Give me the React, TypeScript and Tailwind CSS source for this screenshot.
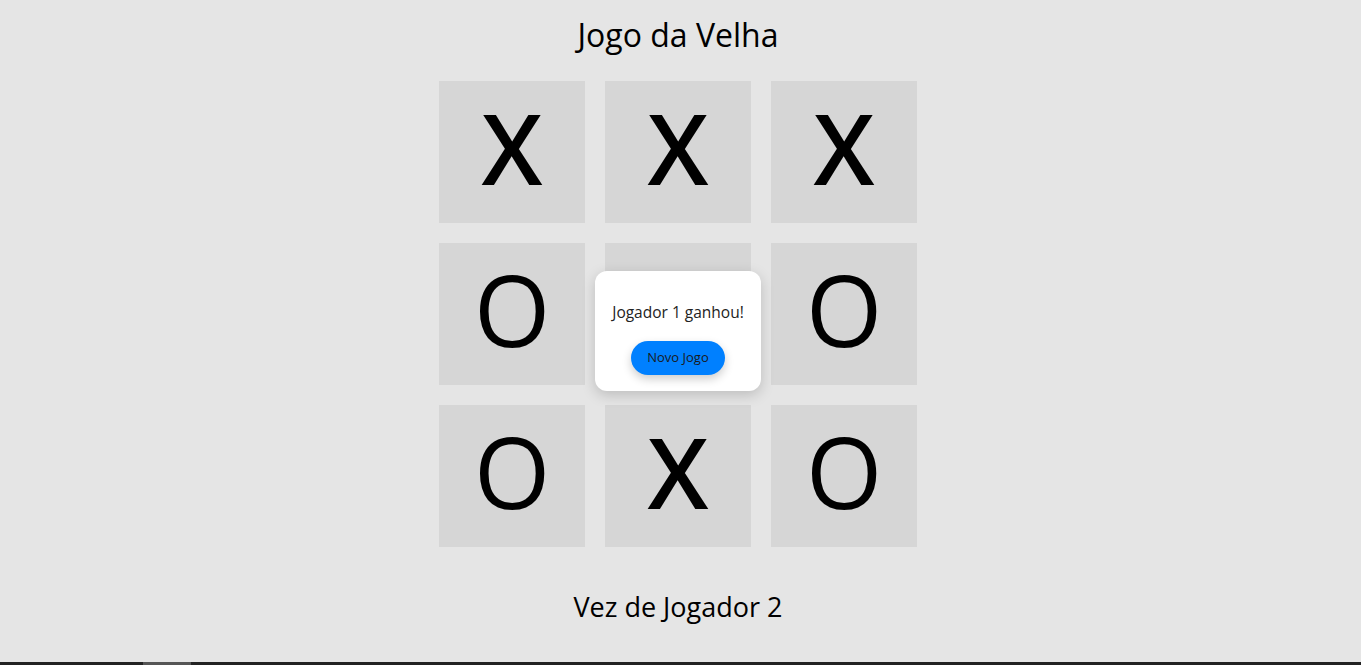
const board = ["X", "X", "X", "O", "", "O", "O", "X", "O"]

export default function App() {
  return (
    <div className="relative h-[665px] w-full overflow-hidden bg-[#e5e5e5] font-['Open_Sans',sans-serif] text-black">
      <div className="flex w-[1356px] flex-col items-center">
        <h1 className="mt-[14px] text-[32px] leading-[42px]">Jogo da Velha</h1>
        <div className="mt-[25px] grid grid-cols-[146px_146px_146px] gap-5">
          {board.map((v, i) => (
            <div
              key={i}
              className={
                "flex h-[142px] items-center justify-center bg-[#d6d6d6] pb-[11px] text-[98px] leading-none " +
                (v === "X" ? "font-semibold" : "font-normal")
              }
            >
              {v}
            </div>
          ))}
        </div>
        <p className="mt-[42px] text-[27px] leading-[36px]">Vez de Jogador 2</p>
      </div>

      <div className="absolute left-[595px] top-[271px] flex h-[120px] w-[166px] flex-col items-center justify-center rounded-xl bg-white shadow-[0_4px_14px_rgba(0,0,0,0.18)]">
        <p className="mt-[14px] text-[15.5px] leading-5 text-[#222]">Jogador 1 ganhou!</p>
        <button className="mt-[19px] h-[34px] w-[94px] rounded-full bg-[#0080ff] text-[13px] text-[#1a1a1a] shadow-[0_4px_10px_rgba(0,0,0,0.2)]">
          Novo Jogo
        </button>
      </div>

      <div className="absolute bottom-0 left-0 flex h-[3px] w-full bg-[#222]">
        <div className="ml-[143px] h-full w-[48px] bg-[#555]" />
      </div>
    </div>
  )
}
